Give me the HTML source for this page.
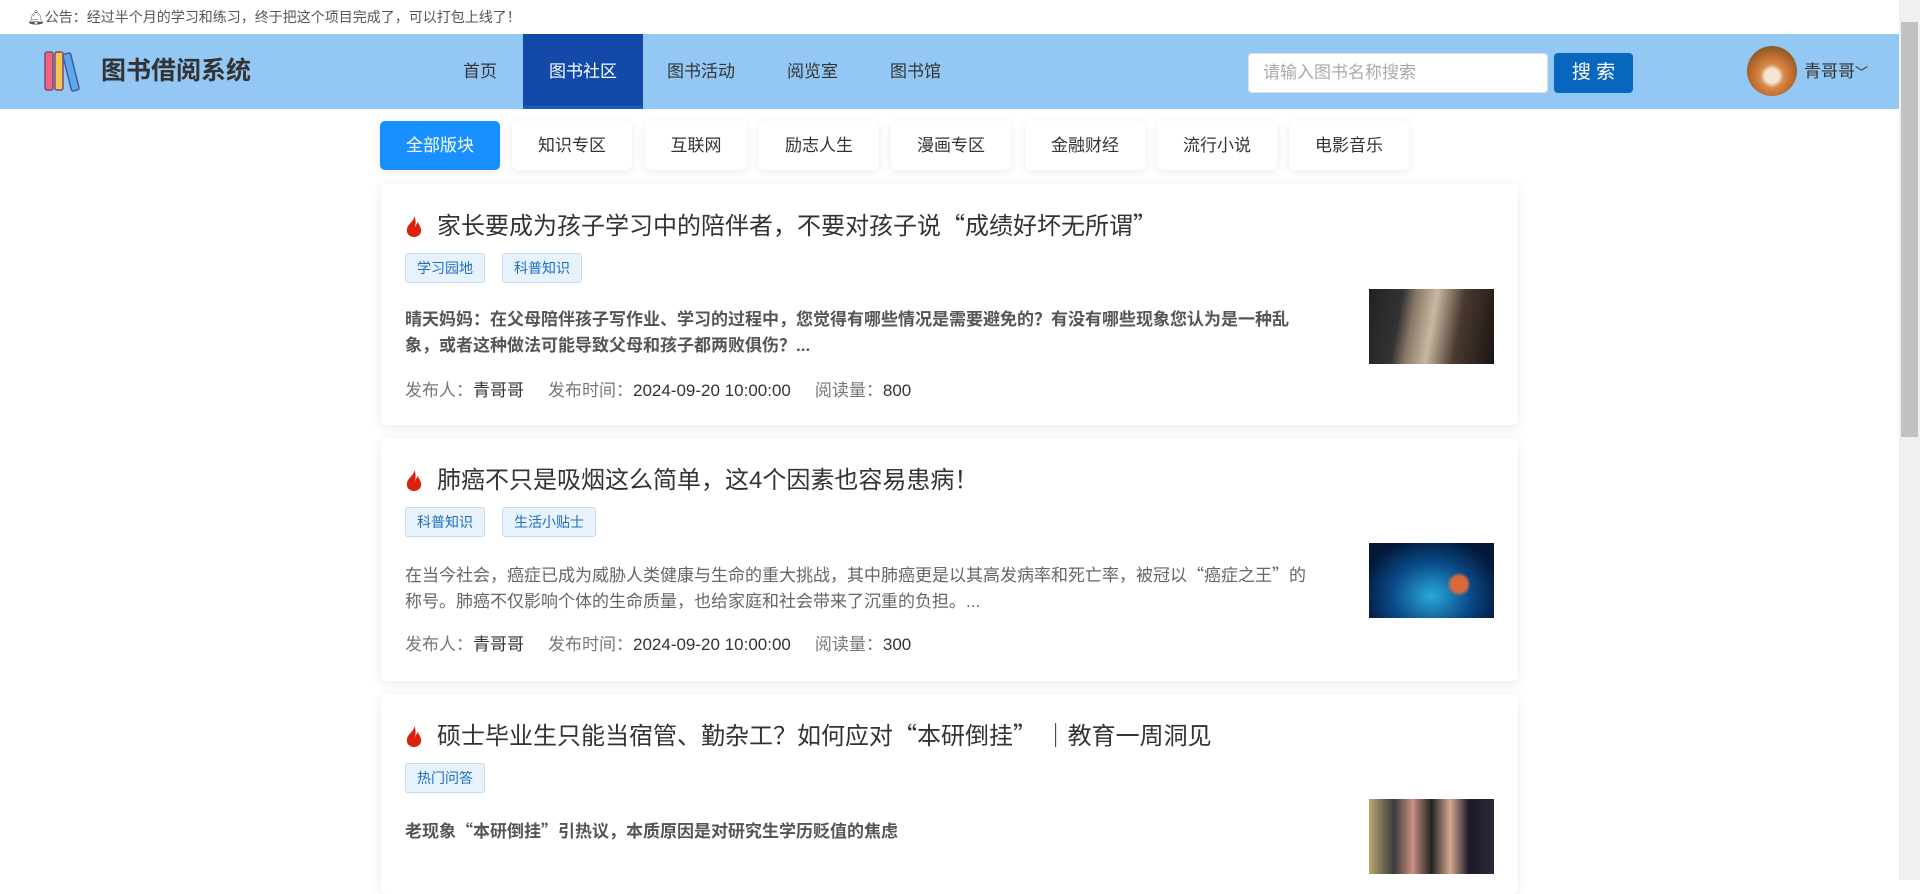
<!DOCTYPE html>
<html><head><meta charset="utf-8">
<style>
*{margin:0;padding:0;box-sizing:border-box}
html,body{width:1920px;height:880px;overflow:hidden;background:#fff;font-family:"Liberation Sans","Noto Sans CJK SC",sans-serif;color:#333}
.q{font-family:"Noto Sans CJK SC",sans-serif}
.notice{position:absolute;left:27px;top:0;height:34px;line-height:34px;font-size:14px;color:#555}
.header{position:absolute;left:0;top:34px;width:1899px;height:75px;background:#93c7f4}
.logo{position:absolute;left:43px;top:16px}
.title{position:absolute;left:101px;top:20px;font-size:25px;font-weight:bold;color:#333;line-height:34px}
.nav a{position:absolute;top:0;height:75px;line-height:75px;font-size:17px;color:#333;text-decoration:none;text-align:center}
.nav a.act{background:#1349a8;color:#fff;width:120px;border-bottom:3px solid #1160c0}
.search{position:absolute;left:1248px;top:19px;width:300px;height:40px;background:#fff;border:1px solid #dcdfe6;border-radius:4px;font-size:17px;color:#aaa;line-height:38px;padding-left:14px}
.btn{position:absolute;left:1554px;top:19px;width:79px;height:40px;background:#0a67c0;border-radius:4px;color:#fff;font-size:19px;line-height:40px;text-align:center}
.avatar{position:absolute;left:1747px;top:12px;width:50px;height:50px;border-radius:50%;background:radial-gradient(circle at 50% 60%,#f4e6d6 0 18%,#d98a4a 30%,#b96a2c 55%,#7a5a2a 80%)}
.user{position:absolute;left:1804px;top:0;line-height:75px;font-size:17px;color:#333}
.scroll{position:absolute;right:0;top:0;width:21px;height:880px;background:#f0f0f0}
.scroll div{position:absolute;left:2px;top:22px;width:17px;height:415px;background:#c1c1c1}
.tabs a{position:absolute;top:121px;height:49px;width:120px;line-height:49px;text-align:center;font-size:17px;color:#333;background:#fff;border-radius:5px;box-shadow:0 2px 10px rgba(0,0,0,.08)}
.tabs a.act{background:#1890ff;color:#fff}
.card{position:absolute;left:381px;width:1137px;background:#fff;border-radius:5px;box-shadow:0 2px 12px rgba(0,0,0,.09)}
.card h3{position:absolute;left:56px;top:22px;font-size:24px;font-weight:normal;color:#333;white-space:nowrap}
.flame{position:absolute;left:24px;top:31px}
.tag{position:absolute;top:69px;height:30px;line-height:28px;padding:0 11px;font-size:14px;color:#1a6fc4;background:#e8f2fc;border:1px solid #c6dcf3;border-radius:3px}
.sum{position:absolute;left:24px;top:123px;width:900px;font-size:17px;line-height:26px;color:#666}
.sum.b{font-weight:bold;color:#555}
.meta{position:absolute;left:24px;top:192px;font-size:17px;color:#777;white-space:nowrap}
.meta b{font-weight:normal;color:#333;margin-right:24px}
.img{position:absolute;left:988px;top:105px;width:125px;height:75px}
</style></head><body>
<div class="notice">&#x1F514;&#xFE0E;公告：经过半个月的学习和练习，终于把这个项目完成了，可以打包上线了！</div>
<div class="header">
 <svg class="logo" width="42" height="44" viewBox="0 0 42 44"><rect x="2" y="2" width="8" height="38" rx="2" fill="#f0637a" stroke="#7a4a7a" stroke-width="1.5"/><rect x="12" y="2" width="8" height="38" rx="2" fill="#f6c54e" stroke="#7a4a7a" stroke-width="1.5"/><rect x="24" y="3" width="8" height="38" rx="2" fill="#5aa8ee" stroke="#4a5a9a" stroke-width="1.5" transform="rotate(-14 28 22)"/></svg>
 <div class="title">图书借阅系统</div>
 <div class="nav">
  <a style="left:463px">首页</a>
  <a class="act" style="left:523px">图书社区</a>
  <a style="left:667px">图书活动</a>
  <a style="left:787px">阅览室</a>
  <a style="left:890px">图书馆</a>
 </div>
 <div class="search">请输入图书名称搜索</div>
 <div class="btn">搜 索</div>
 <div class="avatar"></div>
 <div class="user">青哥哥<span style="font-size:13px">﹀</span></div>
</div>
<div class="scroll"><div></div></div>
<div class="tabs">
 <a class="act" style="left:380px">全部版块</a>
 <a style="left:512px">知识专区</a>
 <a style="left:645px;width:102px">互联网</a>
 <a style="left:759px">励志人生</a>
 <a style="left:891px">漫画专区</a>
 <a style="left:1025px">金融财经</a>
 <a style="left:1157px">流行小说</a>
 <a style="left:1289px">电影音乐</a>
</div>

<div class="card" style="top:184px;height:241px">
 <svg class="flame" width="18" height="22" viewBox="0 0 18 22"><path d="M9 1C10 6 3 8 2 14c-1 5 3 8 7 8s8-3 7-8c-1-4-3-5-3-7-2 2-2 4-3 5C11 8 11 4 9 1z" fill="#d9230f"/></svg>
 <h3>家长要成为孩子学习中的陪伴者，不要对孩子说<span class="q">“</span>成绩好坏无所谓<span class="q">”</span></h3>
 <div class="tag" style="left:24px">学习园地</div>
 <div class="tag" style="left:121px">科普知识</div>
 <div class="sum b">晴天妈妈：在父母陪伴孩子写作业、学习的过程中，您觉得有哪些情况是需要避免的？有没有哪些现象您认为是一种乱象，或者这种做法可能导致父母和孩子都两败俱伤？...</div>
 <div class="img" style="background:linear-gradient(100deg,#222 0,#333 25%,#8a7868 35%,#c8b8a0 50%,#4a3a30 70%,#1a1412 100%)"></div>
 <div class="meta">发布人：<b>青哥哥</b>发布时间：<b>2024-09-20 10:00:00</b>阅读量：<b>800</b></div>
</div>

<div class="card" style="top:438px;height:243px">
 <svg class="flame" width="18" height="22" viewBox="0 0 18 22"><path d="M9 1C10 6 3 8 2 14c-1 5 3 8 7 8s8-3 7-8c-1-4-3-5-3-7-2 2-2 4-3 5C11 8 11 4 9 1z" fill="#d9230f"/></svg>
 <h3>肺癌不只是吸烟这么简单，这4个因素也容易患病！</h3>
 <div class="tag" style="left:24px">科普知识</div>
 <div class="tag" style="left:121px">生活小贴士</div>
 <div class="sum" style="width:908px">在当今社会，癌症已成为威胁人类健康与生命的重大挑战，其中肺癌更是以其高发病率和死亡率，被冠以<span class="q">“</span>癌症之王<span class="q">”</span>的称号。肺癌不仅影响个体的生命质量，也给家庭和社会带来了沉重的负担。...</div>
 <div class="img" style="background:radial-gradient(circle at 72% 55%,#d86a3a 0 8%,transparent 12%),radial-gradient(ellipse at 50% 70%,#2aa8d8 0,#0a4a88 45%,#04183a 80%)"></div>
 <div class="meta">发布人：<b>青哥哥</b>发布时间：<b>2024-09-20 10:00:00</b>阅读量：<b>300</b></div>
</div>

<div class="card" style="top:694px;height:200px">
 <svg class="flame" width="18" height="22" viewBox="0 0 18 22"><path d="M9 1C10 6 3 8 2 14c-1 5 3 8 7 8s8-3 7-8c-1-4-3-5-3-7-2 2-2 4-3 5C11 8 11 4 9 1z" fill="#d9230f"/></svg>
 <h3>硕士毕业生只能当宿管、勤杂工？如何应对<span class="q">“</span>本研倒挂<span class="q">”</span> ｜教育一周洞见</h3>
 <div class="tag" style="left:24px">热门问答</div>
 <div class="sum b">老现象<span class="q">“</span>本研倒挂<span class="q">”</span>引热议，本质原因是对研究生学历贬值的焦虑</div>
 <div class="img" style="background:linear-gradient(90deg,#b8a870 0,#3a3a3a 20%,#c89080 35%,#222 50%,#d8a890 65%,#1a1a2a 80%,#2a2a3a 100%)"></div>
</div>
</body></html>
